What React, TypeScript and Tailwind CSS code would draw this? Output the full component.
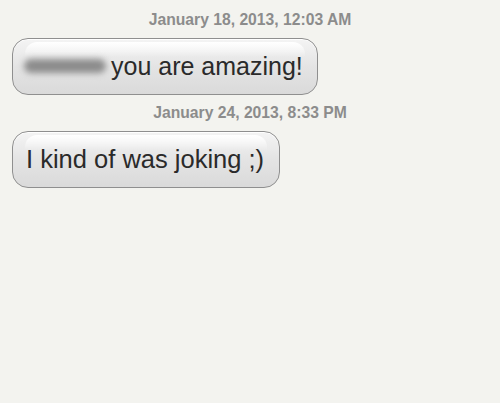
const bubble =
  "relative inline-flex items-center rounded-[16px] border border-[#8f8f8f] bg-gradient-to-b from-[#f4f4f4] via-[#e4e4e4] to-[#dadada] h-[57px] shadow-[inset_0_1px_0_#fff]";

function Stamp({ text }: { text: string }) {
  return (
    <div className="text-center text-[15.7px] font-bold text-[#8c8c8c] leading-none">{text}</div>
  );
}

function Gloss() {
  return (
    <div className="pointer-events-none absolute left-[12px] right-[12px] top-[3px] h-[15px] rounded-t-[12px] bg-gradient-to-b from-white to-[#f2f2f2]/0" />
  );
}

export default function App() {
  return (
    <div className="w-[500px] h-[403px] bg-[#f3f3ef] font-['Liberation_Sans',Arial,sans-serif] pt-[12px]">
      <Stamp text="January 18, 2013, 12:03 AM" />
      <div className="pl-[12px] mt-[10px]">
        <div className={`${bubble} pl-[11px] pr-[14px]`}>
          <Gloss />
          <div className="relative mr-[5px] w-[82px] h-[14px] rounded-full bg-[#8c8c8c] blur-[3px]" />
          <span className="relative text-[25px] text-[#2a2a2a] leading-none">you are amazing!</span>
        </div>
      </div>
      <div className="mt-[10px]">
        <Stamp text="January 24, 2013, 8:33 PM" />
      </div>
      <div className="pl-[12px] mt-[11px]">
        <div className={`${bubble} pl-[13px] pr-[15px]`}>
          <Gloss />
          <span className="relative text-[25.5px] text-[#2a2a2a] leading-none">I kind of was joking ;)</span>
        </div>
      </div>
    </div>
  );
}
